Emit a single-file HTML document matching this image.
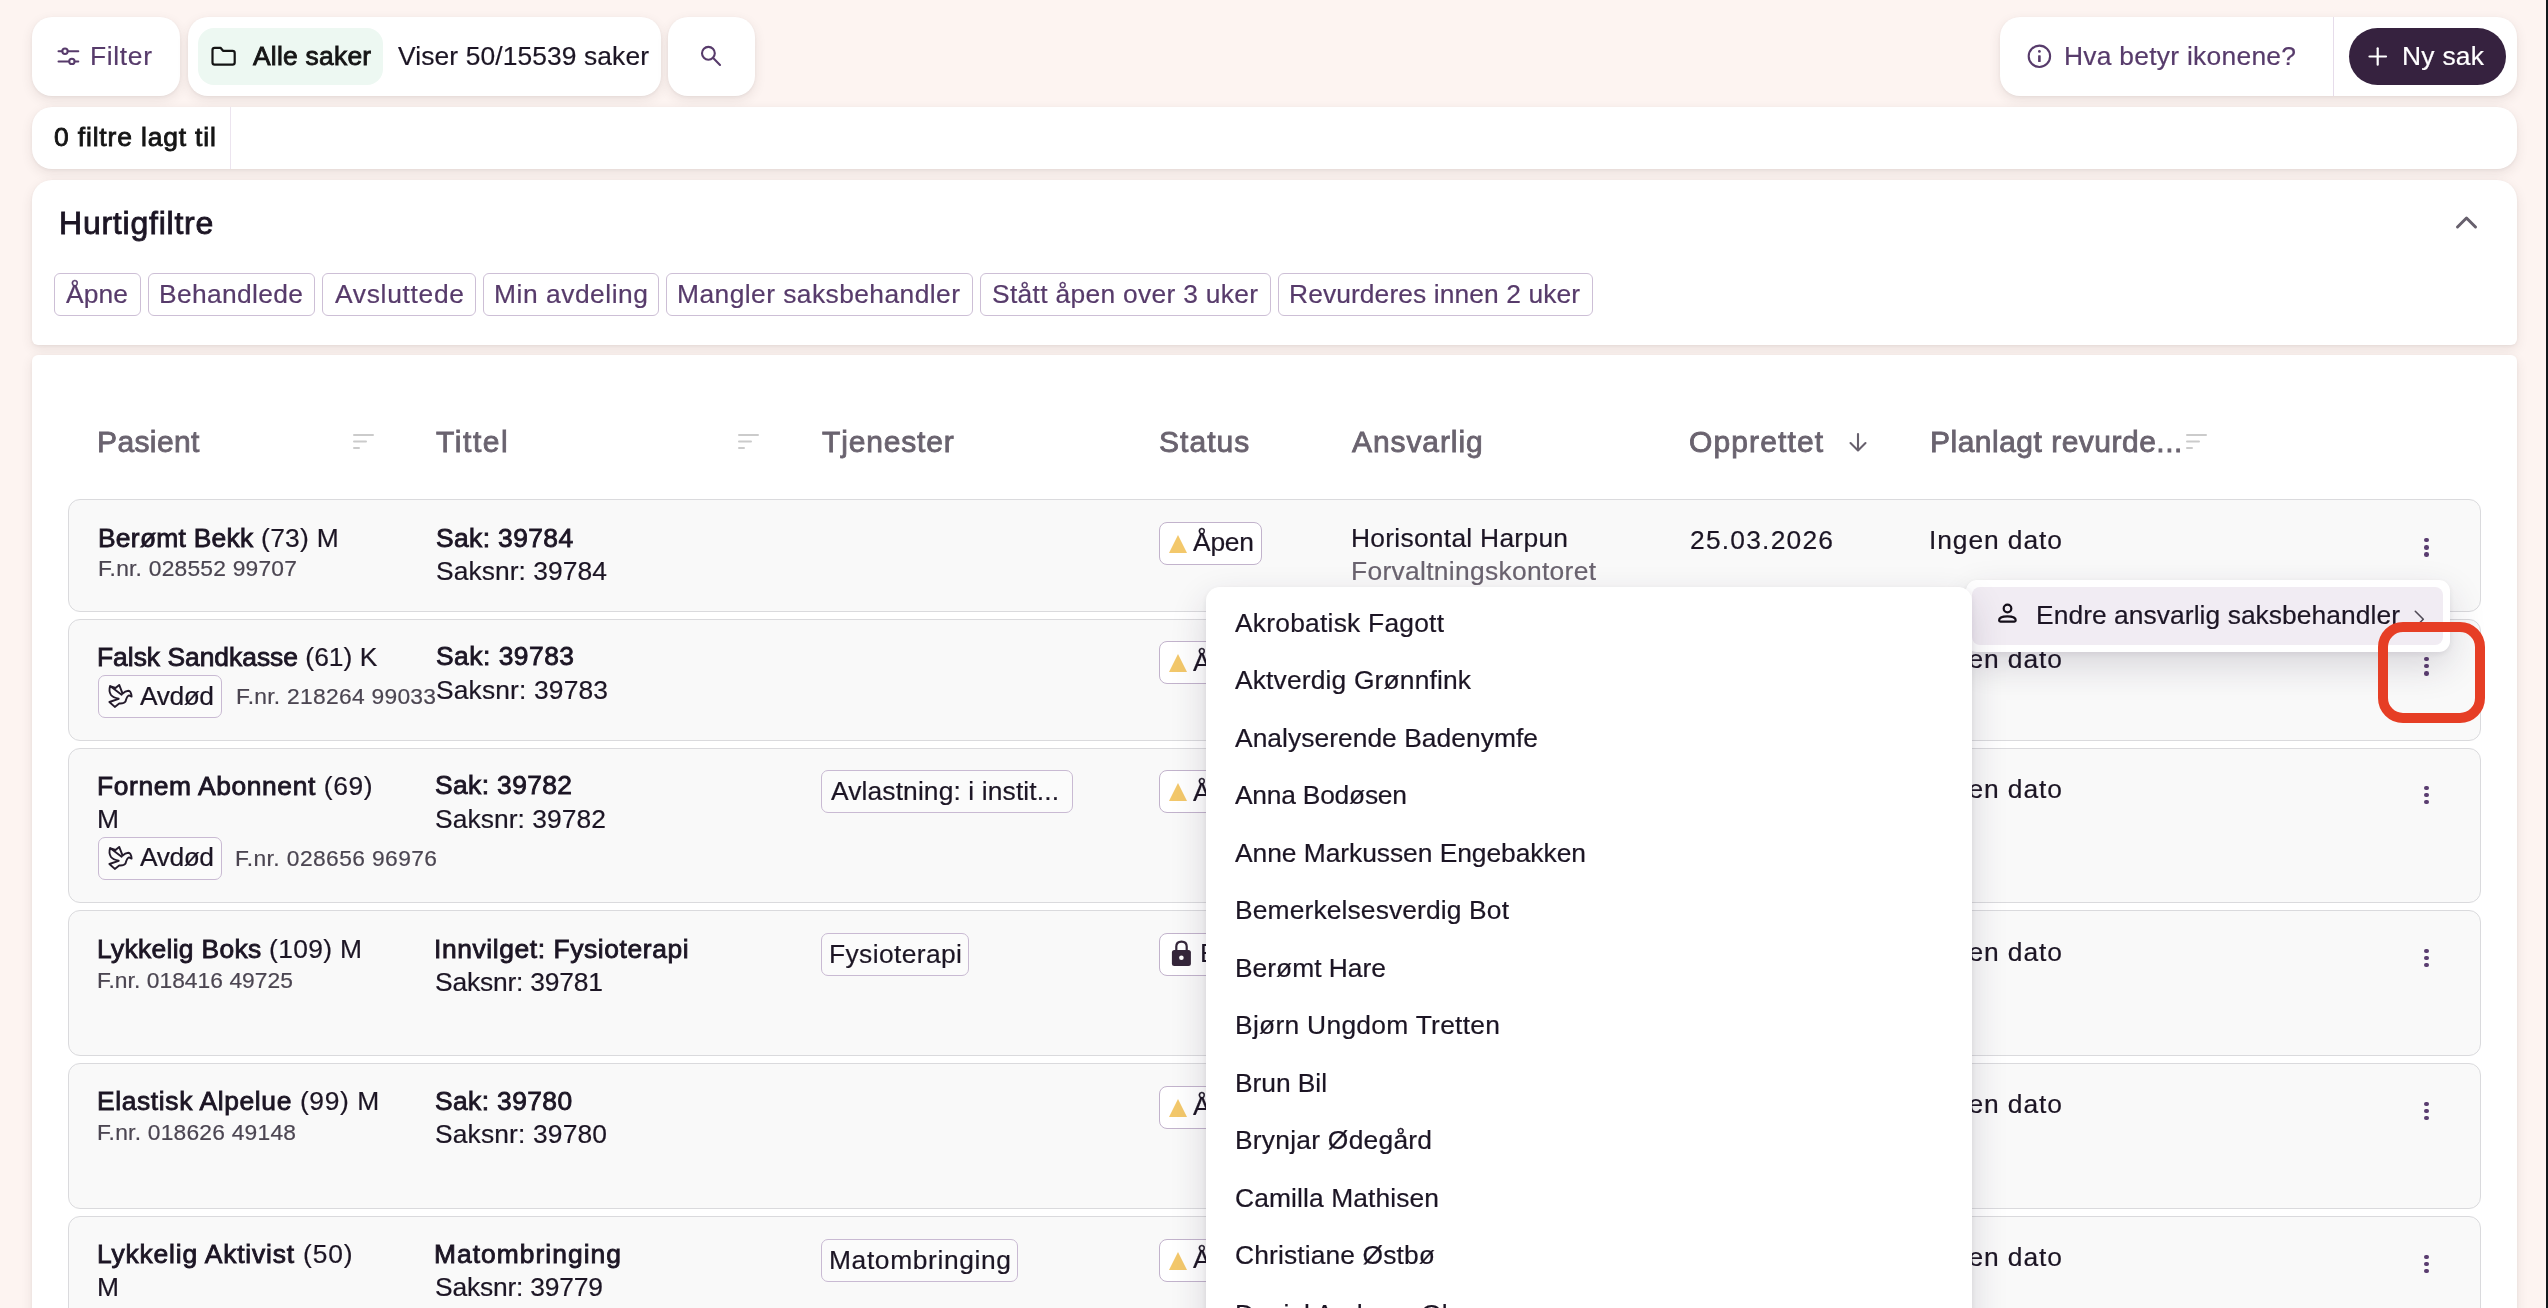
<!DOCTYPE html>
<html><head><meta charset="utf-8">
<style>
html,body{margin:0;padding:0;}
body{width:2548px;height:1308px;overflow:hidden;background:#fdf4f1;position:relative;font-family:"Liberation Sans",sans-serif;}
.a{position:absolute;box-sizing:border-box;}
.card{position:absolute;background:#fff;border-radius:20px;box-shadow:0 4px 12px rgba(70,45,45,0.10),0 1px 3px rgba(70,45,45,0.06);}
.t{position:absolute;white-space:nowrap;line-height:1;will-change:transform;-webkit-text-stroke:0.2px currentColor;}
.t b{font-weight:400;-webkit-text-stroke:0.85px currentColor;}
.row{position:absolute;left:68px;width:2413px;background:#f9f9f9;border:1px solid #dadadd;border-radius:12px;box-sizing:border-box;}
.chip{position:absolute;height:43px;border:1px solid #cdbfd6;border-radius:6px;box-sizing:border-box;background:#fff;}
.tag{position:absolute;height:43px;border:1px solid #c9bad3;border-radius:7px;box-sizing:border-box;background:#fbfbfb;}
.pill{position:absolute;left:1159px;width:103px;height:43px;border:1.5px solid #c2b3cc;border-radius:8px;box-sizing:border-box;background:#fff;}
.tri{position:absolute;width:0;height:0;border-left:9px solid transparent;border-right:9px solid transparent;border-bottom:18px solid #f3c86b;}
svg{position:absolute;overflow:visible;}
.dot{position:absolute;width:4.6px;height:4.6px;border-radius:50%;background:#5a3d70;}
</style></head><body>
<!-- top bar cards -->
<div class="card" style="left:32px;top:17px;width:148px;height:79px;"></div>
<div class="card" style="left:188px;top:17px;width:473px;height:79px;"></div>
<div class="a" style="left:198px;top:28px;width:185px;height:57px;border-radius:16px;background:#edf8f2;"></div>
<div class="card" style="left:668px;top:17px;width:87px;height:79px;"></div>
<div class="card" style="left:2000px;top:17px;width:517px;height:79px;"></div>
<div class="a" style="left:2333px;top:17px;width:1px;height:79px;background:#e6dcea;"></div>
<div class="a" style="left:2349px;top:28px;width:157px;height:57px;border-radius:29px;background:#36223f;"></div>
<!-- filter row -->
<div class="card" style="left:32px;top:107px;width:2485px;height:62px;"></div>
<div class="a" style="left:230px;top:107px;width:1px;height:62px;background:#ece4ef;"></div>
<!-- hurtigfiltre -->
<div class="card" style="left:32px;top:180px;width:2485px;height:165px;border-radius:20px 20px 6px 6px;"></div>
<div class="chip" style="left:54px;top:273px;width:87px;"></div>
<div class="chip" style="left:148px;top:273px;width:167px;"></div>
<div class="chip" style="left:322px;top:273px;width:154px;"></div>
<div class="chip" style="left:483px;top:273px;width:176px;"></div>
<div class="chip" style="left:666px;top:273px;width:307px;"></div>
<div class="chip" style="left:980px;top:273px;width:291px;"></div>
<div class="chip" style="left:1278px;top:273px;width:315px;"></div>
<!-- table card -->
<div class="card" style="left:32px;top:355px;width:2485px;height:1100px;border-radius:6px;"></div>
<!-- rows -->
<div class="row" style="top:499px;height:113px;"></div>
<div class="row" style="top:619px;height:122px;"></div>
<div class="row" style="top:748px;height:155px;"></div>
<div class="row" style="top:910px;height:146px;"></div>
<div class="row" style="top:1063px;height:146px;"></div>
<div class="row" style="top:1216px;height:150px;"></div>
<!-- status pills -->
<div class="pill" style="top:522px;"></div>
<div class="pill" style="top:641px;"></div>
<div class="pill" style="top:770px;"></div>
<div class="pill" style="top:933px;width:140px;"></div>
<div class="pill" style="top:1086px;"></div>
<div class="pill" style="top:1239px;"></div>
<div class="tri" style="left:1169px;top:535px;"></div>
<div class="tri" style="left:1169px;top:654px;"></div>
<div class="tri" style="left:1169px;top:783px;"></div>
<div class="tri" style="left:1169px;top:1099px;"></div>
<div class="tri" style="left:1169px;top:1252px;"></div>
<!-- tags -->
<div class="tag" style="left:98px;top:675px;width:124px;height:43px;"></div>
<div class="tag" style="left:98px;top:837px;width:124px;height:43px;"></div>
<div class="tag" style="left:821px;top:770px;width:252px;"></div>
<div class="tag" style="left:821px;top:933px;width:148px;"></div>
<div class="tag" style="left:821px;top:1239px;width:197px;"></div>
<svg style="left:0;top:0" width="2548" height="1308" viewBox="0 0 2548 1308"><g fill="none" stroke="#573b6b" stroke-width="2" stroke-linecap="round"><line x1="58.5" y1="51.3" x2="62.3" y2="51.3"/><line x1="67.7" y1="51.3" x2="78.3" y2="51.3"/><circle cx="65" cy="51.3" r="2.7"/><line x1="58.5" y1="61.4" x2="69.2" y2="61.4"/><line x1="74.6" y1="61.4" x2="78.3" y2="61.4"/><circle cx="71.9" cy="61.4" r="2.7"/></g><path d="M212.5 50 Q212.5 47.8 214.7 47.8 L220.5 47.8 L223 50.8 L232.5 50.8 Q234.7 50.8 234.7 53 L234.7 62.5 Q234.7 64.7 232.5 64.7 L214.7 64.7 Q212.5 64.7 212.5 62.5 Z" fill="none" stroke="#141414" stroke-width="2.2" stroke-linejoin="round"/><g fill="none" stroke="#573b6b" stroke-width="2.1" stroke-linecap="round"><circle cx="708.4" cy="53.3" r="6.4"/><line x1="713.2" y1="58.1" x2="720" y2="64.9"/></g><g fill="none" stroke="#573b6b" stroke-width="2.1"><circle cx="2039.4" cy="56.3" r="10.7"/></g><circle cx="2039.4" cy="51.4" r="1.4" fill="#573b6b"/><rect x="2038.1" y="55.3" width="2.6" height="6.8" rx="0.6" fill="#573b6b"/><g stroke="#fff" stroke-width="2.2" stroke-linecap="round"><line x1="2369.5" y1="56.5" x2="2386" y2="56.5"/><line x1="2377.7" y1="48.3" x2="2377.7" y2="64.7"/></g><polyline points="2457.5,227 2466.5,218 2475.5,227" fill="none" stroke="#67606d" stroke-width="3" stroke-linecap="round" stroke-linejoin="round"/><g stroke="#cbcbcb" stroke-width="2" stroke-linecap="round"><line x1="354" y1="435" x2="373" y2="435"/><line x1="354" y1="441.5" x2="366" y2="441.5"/><line x1="354" y1="448" x2="359" y2="448"/></g><g stroke="#cbcbcb" stroke-width="2" stroke-linecap="round"><line x1="739" y1="435" x2="758" y2="435"/><line x1="739" y1="441.5" x2="751" y2="441.5"/><line x1="739" y1="448" x2="744" y2="448"/></g><g stroke="#cbcbcb" stroke-width="2" stroke-linecap="round"><line x1="2187" y1="435" x2="2206" y2="435"/><line x1="2187" y1="441.5" x2="2199" y2="441.5"/><line x1="2187" y1="448" x2="2192" y2="448"/></g><g fill="none" stroke="#67606d" stroke-width="2.1" stroke-linecap="round" stroke-linejoin="round"><line x1="1858" y1="434" x2="1858" y2="450"/><polyline points="1850.5,443 1858,450.5 1865.5,443"/></g><path transform="translate(104 680)" d="M6.1 6.1 L17.6 14.7 M11.5 8 L15.2 4.9 L18.6 13.7 Q21 11 24.4 10.8 Q27 11 27.6 16.6 L25 15.4 Q23 16 21.5 21.5 Q20 23.8 15.2 23.5 L10.8 26.9 L5.4 22 L14.7 18.8 Q9 17.5 7 15 Q4.5 11 6.1 6.1 Z" fill="none" stroke="#231a2b" stroke-width="1.9" stroke-linejoin="round" stroke-linecap="round"/><path transform="translate(104 842)" d="M6.1 6.1 L17.6 14.7 M11.5 8 L15.2 4.9 L18.6 13.7 Q21 11 24.4 10.8 Q27 11 27.6 16.6 L25 15.4 Q23 16 21.5 21.5 Q20 23.8 15.2 23.5 L10.8 26.9 L5.4 22 L14.7 18.8 Q9 17.5 7 15 Q4.5 11 6.1 6.1 Z" fill="none" stroke="#231a2b" stroke-width="1.9" stroke-linejoin="round" stroke-linecap="round"/><path d="M1176.3 950.5 L1176.3 946.5 Q1176.3 941.6 1181.5 941.6 Q1186.7 941.6 1186.7 946.5 L1186.7 950.5" fill="none" stroke="#35263a" stroke-width="2.2"/><rect x="1171.9" y="950" width="19" height="16" rx="2.5" fill="#35263a"/><circle cx="1181.4" cy="957.7" r="2.3" fill="#fff"/></svg>
<div class="dot" style="left:2424.1px;top:537.8px"></div>
<div class="dot" style="left:2424.1px;top:545.0px"></div>
<div class="dot" style="left:2424.1px;top:552.2px"></div>
<div class="dot" style="left:2424.1px;top:656.7px"></div>
<div class="dot" style="left:2424.1px;top:663.9px"></div>
<div class="dot" style="left:2424.1px;top:671.1px"></div>
<div class="dot" style="left:2424.1px;top:785.5px"></div>
<div class="dot" style="left:2424.1px;top:792.7px"></div>
<div class="dot" style="left:2424.1px;top:799.9px"></div>
<div class="dot" style="left:2424.1px;top:948.5px"></div>
<div class="dot" style="left:2424.1px;top:955.7px"></div>
<div class="dot" style="left:2424.1px;top:962.9px"></div>
<div class="dot" style="left:2424.1px;top:1101.5px"></div>
<div class="dot" style="left:2424.1px;top:1108.7px"></div>
<div class="dot" style="left:2424.1px;top:1115.9px"></div>
<div class="dot" style="left:2424.1px;top:1254.5px"></div>
<div class="dot" style="left:2424.1px;top:1261.7px"></div>
<div class="dot" style="left:2424.1px;top:1268.9px"></div>
<div id="filter" class="t" style="left:89.50px;top:42.64px;font-size:26.4px;font-weight:400;color:#573b6b;letter-spacing:0.669px;font-family:"Liberation Sans", sans-serif;">Filter</div>
<div id="alle" class="t" style="left:253.00px;top:42.64px;font-size:26.4px;font-weight:400;-webkit-text-stroke:0.85px currentColor;color:#151515;letter-spacing:0.251px;font-family:"Liberation Sans", sans-serif;">Alle saker</div>
<div id="viser" class="t" style="left:398.00px;top:42.64px;font-size:26.4px;font-weight:400;color:#1c1524;letter-spacing:0.109px;font-family:"Liberation Sans", sans-serif;">Viser 50/15539 saker</div>
<div id="hva" class="t" style="left:2064.00px;top:42.64px;font-size:26.4px;font-weight:400;color:#573b6b;letter-spacing:0.268px;font-family:"Liberation Sans", sans-serif;">Hva betyr ikonene?</div>
<div id="nysak" class="t" style="left:2402.00px;top:42.64px;font-size:26.4px;font-weight:400;color:#ffffff;letter-spacing:0.269px;font-family:"Liberation Sans", sans-serif;">Ny sak</div>
<div id="filtre" class="t" style="left:54.00px;top:123.64px;font-size:26.4px;font-weight:400;-webkit-text-stroke:0.85px currentColor;color:#151515;letter-spacing:0.860px;font-family:"Liberation Sans", sans-serif;">0 filtre lagt til</div>
<div id="hurtig" class="t" style="left:59.40px;top:207.30px;font-size:32px;font-weight:400;-webkit-text-stroke:0.85px currentColor;color:#1c1524;letter-spacing:0.768px;font-family:"Liberation Sans", sans-serif;">Hurtigfiltre</div>
<div id="chip0" class="t" style="left:66.30px;top:281.24px;font-size:26.4px;font-weight:400;color:#573b6b;letter-spacing:0.121px;font-family:"Liberation Sans", sans-serif;">Åpne</div>
<div id="chip1" class="t" style="left:159.20px;top:281.24px;font-size:26.4px;font-weight:400;color:#573b6b;letter-spacing:0.344px;font-family:"Liberation Sans", sans-serif;">Behandlede</div>
<div id="chip2" class="t" style="left:335.10px;top:281.24px;font-size:26.4px;font-weight:400;color:#573b6b;letter-spacing:0.690px;font-family:"Liberation Sans", sans-serif;">Avsluttede</div>
<div id="chip3" class="t" style="left:493.50px;top:281.24px;font-size:26.4px;font-weight:400;color:#573b6b;letter-spacing:0.531px;font-family:"Liberation Sans", sans-serif;">Min avdeling</div>
<div id="chip4" class="t" style="left:676.90px;top:281.24px;font-size:26.4px;font-weight:400;color:#573b6b;letter-spacing:0.433px;font-family:"Liberation Sans", sans-serif;">Mangler saksbehandler</div>
<div id="chip5" class="t" style="left:992.10px;top:281.24px;font-size:26.4px;font-weight:400;color:#573b6b;letter-spacing:0.304px;font-family:"Liberation Sans", sans-serif;">Stått åpen over 3 uker</div>
<div id="chip6" class="t" style="left:1289.00px;top:281.24px;font-size:26.4px;font-weight:400;color:#573b6b;letter-spacing:0.091px;font-family:"Liberation Sans", sans-serif;">Revurderes innen 2 uker</div>
<div id="h_pas" class="t" style="left:97.00px;top:426.59px;font-size:30px;font-weight:400;-webkit-text-stroke:0.85px currentColor;color:#6a636f;letter-spacing:0.382px;font-family:"Liberation Sans", sans-serif;">Pasient</div>
<div id="h_tit" class="t" style="left:436.00px;top:426.59px;font-size:30px;font-weight:400;-webkit-text-stroke:0.85px currentColor;color:#6a636f;letter-spacing:1.575px;font-family:"Liberation Sans", sans-serif;">Tittel</div>
<div id="h_tje" class="t" style="left:822.00px;top:426.59px;font-size:30px;font-weight:400;-webkit-text-stroke:0.85px currentColor;color:#6a636f;letter-spacing:0.826px;font-family:"Liberation Sans", sans-serif;">Tjenester</div>
<div id="h_sta" class="t" style="left:1159.00px;top:426.59px;font-size:30px;font-weight:400;-webkit-text-stroke:0.85px currentColor;color:#6a636f;letter-spacing:1.063px;font-family:"Liberation Sans", sans-serif;">Status</div>
<div id="h_ans" class="t" style="left:1352.30px;top:426.59px;font-size:30px;font-weight:400;-webkit-text-stroke:0.85px currentColor;color:#6a636f;letter-spacing:0.910px;font-family:"Liberation Sans", sans-serif;">Ansvarlig</div>
<div id="h_opp" class="t" style="left:1689.40px;top:426.59px;font-size:30px;font-weight:400;-webkit-text-stroke:0.85px currentColor;color:#6a636f;letter-spacing:1.125px;font-family:"Liberation Sans", sans-serif;">Opprettet</div>
<div id="h_pla" class="t" style="left:1930.00px;top:426.59px;font-size:30px;font-weight:400;-webkit-text-stroke:0.85px currentColor;color:#6a636f;letter-spacing:0.494px;font-family:"Liberation Sans", sans-serif;">Planlagt revurde...</div>
<div id="r1n" class="t" style="left:97.50px;top:524.94px;font-size:26.4px;font-weight:400;color:#1c1524;letter-spacing:0.270px;font-family:"Liberation Sans", sans-serif;"><b>Berømt Bekk</b> (73) M</div>
<div id="r1f" class="t" style="left:97.50px;top:557.49px;font-size:22.8px;font-weight:400;color:#4b4551;letter-spacing:0.220px;font-family:"Liberation Sans", sans-serif;">F.nr. 028552 99707</div>
<div id="r1s" class="t" style="left:436.00px;top:524.64px;font-size:26.4px;font-weight:400;-webkit-text-stroke:0.85px currentColor;color:#1c1524;letter-spacing:0.392px;font-family:"Liberation Sans", sans-serif;">Sak: 39784</div>
<div id="r1k" class="t" style="left:436.00px;top:557.64px;font-size:26.4px;font-weight:400;color:#1c1524;letter-spacing:0.067px;font-family:"Liberation Sans", sans-serif;">Saksnr: 39784</div>
<div id="r1st" class="t" style="left:1192.90px;top:529.34px;font-size:26.4px;font-weight:400;color:#1c1524;letter-spacing:-0.214px;font-family:"Liberation Sans", sans-serif;">Åpen</div>
<div id="r1a" class="t" style="left:1351.10px;top:524.64px;font-size:26.4px;font-weight:400;color:#1c1524;letter-spacing:0.269px;font-family:"Liberation Sans", sans-serif;">Horisontal Harpun</div>
<div id="r1a2" class="t" style="left:1351.10px;top:557.64px;font-size:26.4px;font-weight:400;color:#6a636f;letter-spacing:0.311px;font-family:"Liberation Sans", sans-serif;">Forvaltningskontoret</div>
<div id="r1d" class="t" style="left:1689.80px;top:526.84px;font-size:26.4px;font-weight:400;color:#1c1524;letter-spacing:1.210px;font-family:"Liberation Mono", monospace;">25.03.2026</div>
<div id="r1p" class="t" style="left:1929.10px;top:526.64px;font-size:26.4px;font-weight:400;color:#1c1524;letter-spacing:0.916px;font-family:"Liberation Sans", sans-serif;">Ingen dato</div>
<div id="r2n" class="t" style="left:97.00px;top:643.64px;font-size:26.4px;font-weight:400;color:#1c1524;letter-spacing:0.003px;font-family:"Liberation Sans", sans-serif;"><b>Falsk Sandkasse</b> (61) K</div>
<div id="r2av" class="t" style="left:140.00px;top:682.94px;font-size:26.4px;font-weight:400;color:#1c1524;letter-spacing:-0.449px;font-family:"Liberation Sans", sans-serif;">Avdød</div>
<div id="r2f" class="t" style="left:235.60px;top:684.89px;font-size:22.8px;font-weight:400;color:#4b4551;letter-spacing:0.282px;font-family:"Liberation Sans", sans-serif;">F.nr. 218264 99033</div>
<div id="r2s" class="t" style="left:436.00px;top:643.34px;font-size:26.4px;font-weight:400;-webkit-text-stroke:0.85px currentColor;color:#1c1524;letter-spacing:0.503px;font-family:"Liberation Sans", sans-serif;">Sak: 39783</div>
<div id="r2k" class="t" style="left:436.00px;top:676.64px;font-size:26.4px;font-weight:400;color:#1c1524;letter-spacing:0.150px;font-family:"Liberation Sans", sans-serif;">Saksnr: 39783</div>
<div id="r2st" class="t" style="left:1192.90px;top:649.34px;font-size:26.4px;font-weight:400;color:#1c1524;letter-spacing:-0.214px;font-family:"Liberation Sans", sans-serif;">Åpen</div>
<div id="r2p" class="t" style="left:1929.10px;top:645.64px;font-size:26.4px;font-weight:400;color:#1c1524;letter-spacing:0.916px;font-family:"Liberation Sans", sans-serif;">Ingen dato</div>
<div id="r3n" class="t" style="left:97.20px;top:772.84px;font-size:26.4px;font-weight:400;color:#1c1524;letter-spacing:0.605px;font-family:"Liberation Sans", sans-serif;"><b>Fornem Abonnent</b> (69)</div>
<div id="r3m" class="t" style="left:96.80px;top:806.24px;font-size:26.4px;font-weight:400;color:#1c1524;letter-spacing:0.000px;font-family:"Liberation Sans", sans-serif;">M</div>
<div id="r3av" class="t" style="left:140.00px;top:844.44px;font-size:26.4px;font-weight:400;color:#1c1524;letter-spacing:-0.449px;font-family:"Liberation Sans", sans-serif;">Avdød</div>
<div id="r3f" class="t" style="left:235.00px;top:847.49px;font-size:22.8px;font-weight:400;color:#4b4551;letter-spacing:0.400px;font-family:"Liberation Sans", sans-serif;">F.nr. 028656 96976</div>
<div id="r3s" class="t" style="left:435.30px;top:772.34px;font-size:26.4px;font-weight:400;-webkit-text-stroke:0.85px currentColor;color:#1c1524;letter-spacing:0.391px;font-family:"Liberation Sans", sans-serif;">Sak: 39782</div>
<div id="r3k" class="t" style="left:435.30px;top:805.94px;font-size:26.4px;font-weight:400;color:#1c1524;letter-spacing:0.065px;font-family:"Liberation Sans", sans-serif;">Saksnr: 39782</div>
<div id="r3c" class="t" style="left:830.70px;top:777.84px;font-size:26.4px;font-weight:400;color:#1c1524;letter-spacing:0.118px;font-family:"Liberation Sans", sans-serif;">Avlastning: i instit...</div>
<div id="r3st" class="t" style="left:1192.90px;top:779.34px;font-size:26.4px;font-weight:400;color:#1c1524;letter-spacing:-0.214px;font-family:"Liberation Sans", sans-serif;">Åpen</div>
<div id="r3p" class="t" style="left:1929.10px;top:775.64px;font-size:26.4px;font-weight:400;color:#1c1524;letter-spacing:0.916px;font-family:"Liberation Sans", sans-serif;">Ingen dato</div>
<div id="r4n" class="t" style="left:97.20px;top:935.64px;font-size:26.4px;font-weight:400;color:#1c1524;letter-spacing:0.312px;font-family:"Liberation Sans", sans-serif;"><b>Lykkelig Boks</b> (109) M</div>
<div id="r4f" class="t" style="left:97.20px;top:969.29px;font-size:22.8px;font-weight:400;color:#4b4551;letter-spacing:0.045px;font-family:"Liberation Sans", sans-serif;">F.nr. 018416 49725</div>
<div id="r4s" class="t" style="left:434.30px;top:935.64px;font-size:26.4px;font-weight:400;-webkit-text-stroke:0.85px currentColor;color:#1c1524;letter-spacing:0.600px;font-family:"Liberation Sans", sans-serif;">Innvilget: Fysioterapi</div>
<div id="r4k" class="t" style="left:435.30px;top:968.64px;font-size:26.4px;font-weight:400;color:#1c1524;letter-spacing:-0.184px;font-family:"Liberation Sans", sans-serif;">Saksnr: 39781</div>
<div id="r4c" class="t" style="left:828.70px;top:940.64px;font-size:26.4px;font-weight:400;color:#1c1524;letter-spacing:0.392px;font-family:"Liberation Sans", sans-serif;">Fysioterapi</div>
<div id="r4st" class="t" style="left:1200.00px;top:940.34px;font-size:26.4px;font-weight:400;color:#1c1524;letter-spacing:0.000px;font-family:"Liberation Sans", sans-serif;">Behandlet</div>
<div id="r4p" class="t" style="left:1929.10px;top:938.64px;font-size:26.4px;font-weight:400;color:#1c1524;letter-spacing:0.916px;font-family:"Liberation Sans", sans-serif;">Ingen dato</div>
<div id="r5n" class="t" style="left:97.20px;top:1088.04px;font-size:26.4px;font-weight:400;color:#1c1524;letter-spacing:0.633px;font-family:"Liberation Sans", sans-serif;"><b>Elastisk Alpelue</b> (99) M</div>
<div id="r5f" class="t" style="left:97.20px;top:1121.19px;font-size:22.8px;font-weight:400;color:#4b4551;letter-spacing:0.221px;font-family:"Liberation Sans", sans-serif;">F.nr. 018626 49148</div>
<div id="r5s" class="t" style="left:435.30px;top:1088.04px;font-size:26.4px;font-weight:400;-webkit-text-stroke:0.85px currentColor;color:#1c1524;letter-spacing:0.392px;font-family:"Liberation Sans", sans-serif;">Sak: 39780</div>
<div id="r5k" class="t" style="left:435.30px;top:1121.14px;font-size:26.4px;font-weight:400;color:#1c1524;letter-spacing:0.150px;font-family:"Liberation Sans", sans-serif;">Saksnr: 39780</div>
<div id="r5st" class="t" style="left:1192.90px;top:1093.34px;font-size:26.4px;font-weight:400;color:#1c1524;letter-spacing:-0.214px;font-family:"Liberation Sans", sans-serif;">Åpen</div>
<div id="r5p" class="t" style="left:1929.10px;top:1090.64px;font-size:26.4px;font-weight:400;color:#1c1524;letter-spacing:0.916px;font-family:"Liberation Sans", sans-serif;">Ingen dato</div>
<div id="r6n" class="t" style="left:97.20px;top:1240.94px;font-size:26.4px;font-weight:400;color:#1c1524;letter-spacing:0.830px;font-family:"Liberation Sans", sans-serif;"><b>Lykkelig Aktivist</b> (50)</div>
<div id="r6m" class="t" style="left:96.80px;top:1273.64px;font-size:26.4px;font-weight:400;color:#1c1524;letter-spacing:0.000px;font-family:"Liberation Sans", sans-serif;">M</div>
<div id="r6s" class="t" style="left:434.30px;top:1240.94px;font-size:26.4px;font-weight:400;-webkit-text-stroke:0.85px currentColor;color:#1c1524;letter-spacing:1.035px;font-family:"Liberation Sans", sans-serif;">Matombringing</div>
<div id="r6k" class="t" style="left:435.30px;top:1274.14px;font-size:26.4px;font-weight:400;color:#1c1524;letter-spacing:-0.182px;font-family:"Liberation Sans", sans-serif;">Saksnr: 39779</div>
<div id="r6c" class="t" style="left:828.70px;top:1247.14px;font-size:26.4px;font-weight:400;color:#1c1524;letter-spacing:0.620px;font-family:"Liberation Sans", sans-serif;">Matombringing</div>
<div id="r6st" class="t" style="left:1192.90px;top:1246.34px;font-size:26.4px;font-weight:400;color:#1c1524;letter-spacing:-0.214px;font-family:"Liberation Sans", sans-serif;">Åpen</div>
<div id="r6p" class="t" style="left:1929.10px;top:1243.64px;font-size:26.4px;font-weight:400;color:#1c1524;letter-spacing:0.916px;font-family:"Liberation Sans", sans-serif;">Ingen dato</div>
<!-- context menu -->
<div class="a" style="left:1966px;top:580px;width:484px;height:72px;border-radius:11px;background:#fff;box-shadow:0 14px 36px rgba(45,30,60,0.16),0 2px 6px rgba(45,30,60,0.08);"></div>
<div class="a" style="left:1972px;top:587px;width:471px;height:58px;border-radius:8px;background:#f1ecf3;"></div>
<svg style="left:0;top:0" width="2548" height="1308" viewBox="0 0 2548 1308"><circle cx="2007.5" cy="608.5" r="3.8" fill="none" stroke="#150f1a" stroke-width="2.2"/><path d="M1999.1 620.3 Q1999.1 616.3 2007.4 616.3 Q2015.7 616.3 2015.7 620.3 Q2015.7 621.6 2014.4 621.6 L2000.4 621.6 Q1999.1 621.6 1999.1 620.3 Z" fill="none" stroke="#150f1a" stroke-width="2.2" stroke-linejoin="round"/><polyline points="2415.3,611.3 2423.3,619.2 2415.3,627" fill="none" stroke="#4f4955" stroke-width="1.6" stroke-linecap="round" stroke-linejoin="round"/></svg>
<div id="endre" class="t" style="left:2035.50px;top:601.94px;font-size:26.4px;font-weight:400;color:#1c1524;letter-spacing:0.058px;font-family:"Liberation Sans", sans-serif;">Endre ansvarlig saksbehandler</div>
<!-- dropdown -->
<div class="a" style="left:1206px;top:587px;width:766px;height:900px;border-radius:14px;background:#fff;box-shadow:0 14px 36px rgba(45,30,60,0.16),0 2px 6px rgba(45,30,60,0.08);"></div>
<div id="dd0" class="t" style="left:1235.20px;top:609.64px;font-size:26.4px;font-weight:400;color:#1c1524;letter-spacing:0.228px;font-family:"Liberation Sans", sans-serif;">Akrobatisk Fagott</div>
<div id="dd1" class="t" style="left:1235.20px;top:667.14px;font-size:26.4px;font-weight:400;color:#1c1524;letter-spacing:0.156px;font-family:"Liberation Sans", sans-serif;">Aktverdig Grønnfink</div>
<div id="dd2" class="t" style="left:1235.20px;top:724.64px;font-size:26.4px;font-weight:400;color:#1c1524;letter-spacing:0.037px;font-family:"Liberation Sans", sans-serif;">Analyserende Badenymfe</div>
<div id="dd3" class="t" style="left:1235.20px;top:782.14px;font-size:26.4px;font-weight:400;color:#1c1524;letter-spacing:-0.238px;font-family:"Liberation Sans", sans-serif;">Anna Bodøsen</div>
<div id="dd4" class="t" style="left:1235.20px;top:839.64px;font-size:26.4px;font-weight:400;color:#1c1524;letter-spacing:-0.048px;font-family:"Liberation Sans", sans-serif;">Anne Markussen Engebakken</div>
<div id="dd5" class="t" style="left:1235.20px;top:897.14px;font-size:26.4px;font-weight:400;color:#1c1524;letter-spacing:0.132px;font-family:"Liberation Sans", sans-serif;">Bemerkelsesverdig Bot</div>
<div id="dd6" class="t" style="left:1235.20px;top:954.64px;font-size:26.4px;font-weight:400;color:#1c1524;letter-spacing:-0.005px;font-family:"Liberation Sans", sans-serif;">Berømt Hare</div>
<div id="dd7" class="t" style="left:1235.20px;top:1012.14px;font-size:26.4px;font-weight:400;color:#1c1524;letter-spacing:0.282px;font-family:"Liberation Sans", sans-serif;">Bjørn Ungdom Tretten</div>
<div id="dd8" class="t" style="left:1235.20px;top:1069.64px;font-size:26.4px;font-weight:400;color:#1c1524;letter-spacing:-0.059px;font-family:"Liberation Sans", sans-serif;">Brun Bil</div>
<div id="dd9" class="t" style="left:1235.20px;top:1127.14px;font-size:26.4px;font-weight:400;color:#1c1524;letter-spacing:0.242px;font-family:"Liberation Sans", sans-serif;">Brynjar Ødegård</div>
<div id="dd10" class="t" style="left:1235.20px;top:1184.64px;font-size:26.4px;font-weight:400;color:#1c1524;letter-spacing:0.106px;font-family:"Liberation Sans", sans-serif;">Camilla Mathisen</div>
<div id="dd11" class="t" style="left:1235.20px;top:1242.14px;font-size:26.4px;font-weight:400;color:#1c1524;letter-spacing:0.132px;font-family:"Liberation Sans", sans-serif;">Christiane Østbø</div>
<div id="dd12" class="t" style="left:1235.20px;top:1301.44px;font-size:26.4px;font-weight:400;color:#1c1524;letter-spacing:0.000px;font-family:"Liberation Sans", sans-serif;">Daniel Andreas Olsen</div>
<!-- red highlight -->
<div class="a" style="left:2378px;top:622px;width:107px;height:101px;border:10px solid #e63e25;border-radius:25px;"></div>
<div class="a" style="left:2546px;top:0;width:2px;height:1308px;background:#11181c;"></div>
</body></html>
